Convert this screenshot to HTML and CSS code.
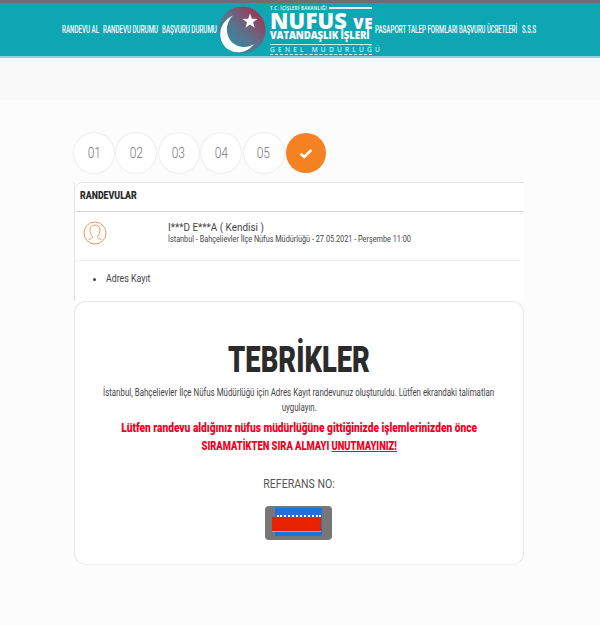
FILE: index.html
```html
<!DOCTYPE html>
<html lang="tr">
<head>
  <meta charset="UTF-8" />
  <title>Randevu</title>
  <link rel="stylesheet" href="styles.css">
</head>
<body>
  <header class="topbar">
    <nav class="nav">
      <a class="nav-link">RANDEVU AL</a>
      <a class="nav-link">RANDEVU DURUMU</a>
      <a class="nav-link">BAŞVURU DURUMU</a>
      <div class="logo">
        <svg class="logo-mark" width="48" height="48" viewBox="0 0 48 48">
          <defs>
            <linearGradient id="logoFill" x1="1" y1="0" x2="0.1" y2="0.9">
              <stop offset="0" stop-color="#b5213f"/>
              <stop offset="0.55" stop-color="#5f6f8a"/>
              <stop offset="1" stop-color="#1c96a8"/>
            </linearGradient>
          </defs>
          <circle cx="24" cy="24" r="23.5" fill="url(#logoFill)"/>
          <path d="M15 9.5C3 15 -1 28 5 38C11 48 27 50 36 38C29 43 18 42 12 34C7 26 8 16 15 9.5Z" fill="#fff"/>
          <path d="M32 7.5l1.9 5.3 5.6.1-4.5 3.4 1.7 5.4-4.7-3.2-4.6 3.2 1.6-5.4-4.5-3.4 5.7-.1z" fill="#fff"/>
        </svg>
        <div class="logo-text">
          <div class="logo-top"><span>T.C. İÇİŞLERİ BAKANLIĞI</span><i></i></div>
          <div class="logo-main">NUFUS <small>VE</small></div>
          <div class="logo-sub">VATANDAŞLIK İŞLERİ</div>
          <div class="logo-gm">GENEL MÜDÜRLÜĞÜ</div>
        </div>
      </div>
      <a class="nav-link">PASAPORT TALEP FORMLARI</a>
      <a class="nav-link">BAŞVURU ÜCRETLERİ</a>
      <a class="nav-link">S.S.S</a>
    </nav>
  </header>

  <div class="band"></div>

  <main class="content">
    <div class="steps">
      <div class="step"><span>01</span></div>
      <div class="step"><span>02</span></div>
      <div class="step"><span>03</span></div>
      <div class="step"><span>04</span></div>
      <div class="step"><span>05</span></div>
      <div class="step step-done">
        <svg width="14" height="11" viewBox="0 0 14 11"><path d="M1.6 5.6l3.6 3.4 7.2-7.2" fill="none" stroke="#fff" stroke-width="2.6"/></svg>
      </div>
    </div>

    <section class="panel">
      <div class="panel-title"><span>RANDEVULAR</span></div>
      <div class="appt">
        <svg class="appt-icon" width="24" height="24" viewBox="0 0 24 24" fill="none" stroke="#ea9c64" stroke-width="1">
          <circle cx="12" cy="12" r="11"/>
          <path d="M9.500 15.500c-2-2-2.500-4.500-2.500-6.500c0-3 2-5 5-5s5 2 5 5c0 2-.5 4.500-2.500 6.500c0 1.500 1 2 4 3M9.500 15.500c0 1.500-1 2-4 3"/>
        </svg>
        <div class="appt-info">
          <div class="appt-name"><span>I***D E***A ( Kendisi )</span></div>
          <div class="appt-place"><span>İstanbul - Bahçelievler İlçe Nüfus Müdürlüğü - 27.05.2021 - Perşembe 11:00</span></div>
        </div>
      </div>
      <ul class="services">
        <li><span>Adres Kayıt</span></li>
      </ul>
    </section>

    <section class="result">
      <h1 class="result-title">TEBRİKLER</h1>
      <p class="result-text"><span>İstanbul, Bahçelievler İlçe Nüfus Müdürlüğü için Adres Kayıt randevunuz oluşturuldu. Lütfen ekrandaki talimatları</span></p>
      <p class="result-text result-text-end"><span>uygulayın.</span></p>
      <p class="warn"><span>Lütfen randevu aldığınız nüfus müdürlüğüne gittiğinizde işlemlerinizden önce</span></p>
      <p class="warn warn-end"><span>SIRAMATİKTEN SIRA ALMAYI <u>UNUTMAYINIZ!</u></span></p>
      <div class="ref-label"><span>REFERANS NO:</span></div>
      <div class="ref-box">
        <div class="ref-blue"></div>
        <div class="ref-dots"></div>
        <div class="ref-red"></div>
      </div>
    </section>
  </main>
</body>
</html>
```

FILE: styles.css
```css
* {
  box-sizing: border-box;
}
body {
  margin: 0;
  font-family: Roboto, "Liberation Sans", sans-serif;
  background-color: #fcfcfc;
  color: #333;
}
p, h1, ul {
  margin: 0;
}

/* header */
.topbar {
  height: 58px;
  border-top: 3px solid #6e6e6e;
  border-bottom: 2px solid #8ad8de;
  background: #0fa6b4;
}
.nav {
  display: grid;
  grid-template-columns: 37px 55px 54px 151px 80px 59px 13px;
  column-gap: 4px;
  align-items: center;
  justify-content: start;
  height: 53px;
  padding-left: 62px;
}
.nav-link {
  display: block;
  white-space: nowrap;
  color: #fff;
  font-size: 10px;
  font-weight: 500;
  transform: scaleX(0.62);
  transform-origin: left center;
}
.nav-link:nth-last-child(2), .nav-link:last-child {
  transform: scaleX(0.59);
}
.logo {
  display: flex;
  align-items: center;
  gap: 4px;
  color: #fff;
  margin-left: -2px;
}
.logo-mark {
  flex: none;
}
.logo-text {
  width: 102px;
  padding-top: 1px;
  font-family: "Open Sans", sans-serif;
  font-weight: 800;
  white-space: nowrap;
  line-height: 1;
}
.logo-top {
  display: flex;
  align-items: center;
  gap: 2px;
  font-size: 4.400px;
  letter-spacing: 0.3px;
  height: 5px;
  font-weight: 600;
}
.logo-top i {
  flex: 1;
  height: 2px;
  background: #dfeff1;
}
.logo-main {
  font-size: 22px;
  height: 19px;
  line-height: 19px;
  letter-spacing: 0.2px;
}
.logo-main small {
  font-size: 15px;
  letter-spacing: 0.6px;
}
.logo-sub {
  font-size: 9.600px;
  height: 10px;
  margin-top: 1px;
  line-height: 10px;
  letter-spacing: -0.1px;
}
.logo-gm {
  margin-top: 3px;
  border-top: 1px solid #cdebee;
  border-bottom: 1px dashed #fff;
  font-size: 6.500px;
  font-weight: 500;
  height: 11px;
  line-height: 9px;
  letter-spacing: 3.300px;
}

.band {
  height: 42px;
  background: #f9f9f9;
}

/* main column */
.content {
  width: 525px;
  padding: 33px 1px 0 74px;
}
.steps {
  display: flex;
  gap: 2.400px;
  margin-bottom: 9px;
}
.step {
  display: flex;
  align-items: center;
  justify-content: center;
  width: 40px;
  height: 40px;
  border-radius: 50%;
  background: #fff;
  box-shadow: 0 0 2px rgba(0, 0, 0, 0.16);
  color: #777;
  font-size: 15px;
  font-weight: 300;
}
.step span {
  transform: scaleX(0.8);
}
.step-done {
  background: #f58220;
  box-shadow: none;
}

.panel {
  background: #fff;
  border-left: 1px solid #e4e4e4;
}
.panel-title {
  height: 30px;
  border-top: 1px solid #e2e2e2;
  border-bottom: 1px solid #dcdcdc;
  border-top-left-radius: 8px;
  padding: 6px 0 0 5px;
  font-size: 11px;
  font-weight: 900;
  color: #2c2c2c;
  line-height: 13px;
}
.panel-title span, .appt-name span, .appt-place span, .services span,
.result-text span, .warn span, .ref-label span {
  display: inline-block;
  flex: none;
  white-space: nowrap;
}
.panel-title span {
  transform: scaleX(0.8);
  transform-origin: left center;
}
.appt {
  display: flex;
  height: 49px;
  margin-right: 4px;
  padding: 9px 0 0 8px;
  border-bottom: 1px solid #eee;
}
.appt-icon {
  flex: none;
  margin-right: 61px;
}
.appt-info {
  padding-top: 1px;
}
.appt-name {
  font-size: 11px;
  line-height: 12px;
  color: #444;
}
.appt-place {
  font-size: 9px;
  line-height: 11px;
  color: #444;
}
.appt-name span, .appt-place span, .services span {
  transform-origin: left center;
  transform: scaleX(0.8);
}
.appt-name span {
  transform: scaleX(0.9);
}
.appt-place span {
  transform: scaleX(0.81);
}
.services {
  height: 40px;
  padding: 11px 0 0 31px;
  font-size: 11px;
  line-height: 14px;
  color: #444;
}

/* result card */
.result {
  height: 264px;
  padding-top: 38px;
  background: #fff;
  border: 1px solid #e6e6e6;
  border-bottom-color: #f0f0f0;
  border-radius: 12px;
  text-align: center;
}
.result-title {
  font-size: 36px;
  line-height: 40px;
  font-weight: 900;
  color: #2b2b2b;
  transform: scaleX(0.76);
}
.result-text {
  display: flex;
  justify-content: center;
  height: 15px;
  margin-top: 5px;
  font-size: 10px;
  line-height: 15px;
  color: #444;
}
.result-text span {
  transform: scaleX(0.79);
}
.result-text-end {
  margin-top: 0;
}
.warn {
  display: flex;
  justify-content: center;
  height: 17px;
  margin-top: 5px;
  font-size: 12px;
  line-height: 17px;
  font-weight: 900;
  color: #f0001e;
}
.warn span {
  transform: scaleX(0.846);
}
.warn-end {
  margin-top: 1px;
}
.warn-end span {
  transform: scaleX(0.78);
}
.ref-label {
  margin-top: 21px;
  font-size: 13px;
  line-height: 16px;
  color: #555;
}
.ref-label span {
  transform: scaleX(0.81);
}

.ref-box {
  position: relative;
  width: 67px;
  height: 34px;
  margin: 14px 0 0 190px;
  background: #777;
  border-radius: 4px;
}
.ref-blue {
  position: absolute;
  left: 10px;
  top: 2px;
  width: 47px;
  height: 28px;
  background: #1f72dc;
}
.ref-dots {
  position: absolute;
  left: 12px;
  top: 9px;
  width: 44px;
  border-top: 2px dotted #fff;
}
.ref-red {
  position: absolute;
  left: 7px;
  top: 11px;
  width: 49px;
  height: 15px;
  background: #e62200;
  border-bottom: 1px solid #ee8a70;
}
```
